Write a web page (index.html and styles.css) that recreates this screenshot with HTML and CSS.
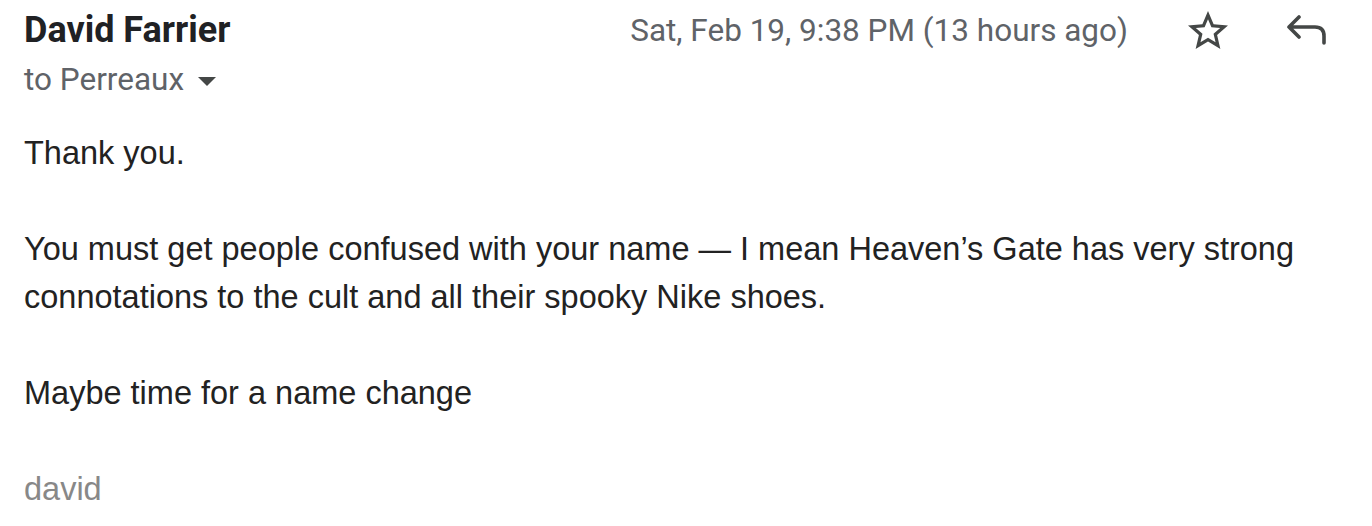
FILE: index.html
```html
<!DOCTYPE html>
<html>
<head>
<meta charset="utf-8">
<link rel="stylesheet" href="styles.css">
</head>
<body>
<div class="message">
  <div class="header">
    <div class="who">
      <div class="sender">David Farrier</div>
      <div class="to">to Perreaux <span class="caret"></span></div>
    </div>
    <div class="meta">
      <span class="date">Sat, Feb 19, 9:38 PM (13 hours ago)</span>
      <svg class="star" width="48" height="48" viewBox="0 0 24 24"><path fill="#444746" d="M22 9.24l-7.19-.62L12 2 9.19 8.63 2 9.24l5.46 4.73L5.82 21 12 17.27 18.18 21l-1.63-7.03L22 9.24zM12 15.4l-3.76 2.27 1-4.28-3.32-2.88 4.38-.38L12 6.1l1.71 4.04 4.38.38-3.32 2.88 1 4.28L12 15.4z"/></svg>
      <svg class="reply" width="44" height="32" viewBox="0 0 44 32"><path fill="none" stroke="#444746" stroke-width="3.6" stroke-linecap="round" stroke-linejoin="round" d="M13 2 L3 12 L13 22 M3 12 H29 Q38 12 38 21 V28"/></svg>
    </div>
  </div>
  <div class="body">
    <div>Thank you.</div>
    <br>
    <div>You must get people confused with your name — I mean Heaven’s Gate has very strong connotations to the cult and all their spooky Nike shoes.</div>
    <br>
    <div>Maybe time for a name change</div>
    <br>
    <div class="sig">david</div>
  </div>
</div>
</body>
</html>
```
FILE: styles.css
```css
html, body {
  margin: 0;
  background: #fff;
}
.message {
  padding: 0 0 0 24px;
}
.header {
  display: flex;
  justify-content: space-between;
  align-items: flex-start;
}
.sender {
  font-family: Roboto, "Liberation Sans", sans-serif;
  font-weight: 700;
  font-size: 36px;
  line-height: 40px;
  color: #202124;
  margin-top: 10px;
}
.to {
  font-family: Roboto, "Liberation Sans", sans-serif;
  font-size: 31.5px;
  line-height: 40px;
  color: #5f6368;
  margin-top: 10px;
  display: flex;
  align-items: center;
}
.caret {
  display: inline-block;
  width: 0;
  height: 0;
  border-left: 9px solid transparent;
  border-right: 9px solid transparent;
  border-top: 9px solid #444746;
  margin-left: 14px;
  margin-top: 2px;
}
.meta {
  display: flex;
  align-items: center;
  margin-top: 7px;
  padding-right: 42px;
}
.date {
  font-family: Roboto, "Liberation Sans", sans-serif;
  font-size: 31.5px;
  line-height: 40px;
  color: #5f6368;
  margin-right: 56px;
}
.star {
  margin-right: 54px;
}
.body {
  font-family: "Liberation Sans", Arial, sans-serif;
  font-size: 32.5px;
  line-height: 48px;
  color: #222;
  margin-top: 29px;
}
.sig {
  color: #888;
}
```
